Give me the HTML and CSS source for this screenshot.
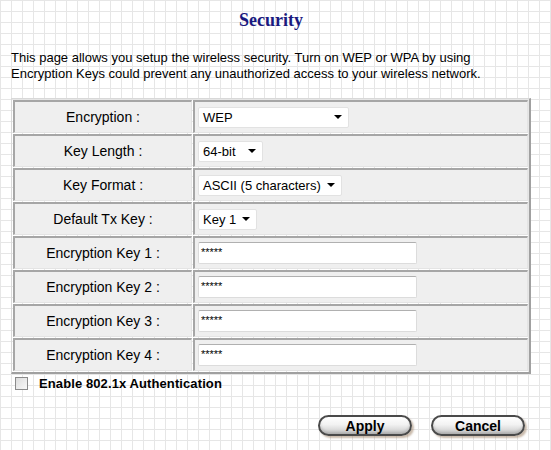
FILE: index.html
```html
<!DOCTYPE html>
<html>
<head>
<meta charset="utf-8">
<link rel="stylesheet" href="styles.css">
</head>
<body>
<div class="page">
  <h1 class="title">Security</h1>
  <p class="intro">This page allows you setup the wireless security. Turn on WEP or WPA by using Encryption Keys could prevent any unauthorized access to your wireless network.</p>
  <table class="form">
    <tr><td class="lbl">Encryption :</td><td class="val"><div class="sel w151"><span>WEP</span><i class="arrow"></i></div></td></tr>
    <tr><td class="lbl">Key Length :</td><td class="val"><div class="sel w65"><span>64-bit</span><i class="arrow"></i></div></td></tr>
    <tr><td class="lbl">Key Format :</td><td class="val"><div class="sel w143"><span>ASCII (5 characters)</span><i class="arrow"></i></div></td></tr>
    <tr><td class="lbl">Default Tx Key :</td><td class="val"><div class="sel w59"><span>Key 1</span><i class="arrow"></i></div></td></tr>
    <tr><td class="lbl">Encryption Key 1 :</td><td class="val"><div class="inp">*****</div></td></tr>
    <tr><td class="lbl">Encryption Key 2 :</td><td class="val"><div class="inp">*****</div></td></tr>
    <tr><td class="lbl">Encryption Key 3 :</td><td class="val"><div class="inp">*****</div></td></tr>
    <tr><td class="lbl">Encryption Key 4 :</td><td class="val"><div class="inp">*****</div></td></tr>
  </table>
  <label class="check"><span class="box"></span>Enable 802.1x Authentication</label>
  <div class="buttons">
    <button class="btn">Apply</button>
    <button class="btn">Cancel</button>
  </div>
</div>
</body>
</html>
```

FILE: styles.css
```css
html, body {
  margin: 0;
  padding: 0;
}
body {
  width: 551px;
  height: 450px;
  overflow: hidden;
  background-color: #fff;
  background-image:
    linear-gradient(#e6e6e6 1px, transparent 1px),
    linear-gradient(90deg, #e6e6e6 1px, transparent 1px);
  background-size: 11px 11px;
  font-family: "Liberation Sans", Arial, sans-serif;
  font-size: 13px;
  color: #000;
}
.page {
  padding: 0 0 0 11px;
  width: 520px;
}
.title {
  margin: 0;
  padding-top: 9px;
  width: 520px;
  text-align: center;
  font-family: "Liberation Serif", "Times New Roman", serif;
  font-size: 18px;
  line-height: 22px;
  font-weight: bold;
  color: #1a1a80;
}
.intro {
  margin: 19px 0 0 0;
  line-height: 16px;
  width: 500px;
}
.form {
  margin-top: 16px;
  width: 520px;
  border-collapse: separate;
  border-spacing: 1px;
  border-style: solid;
  border-width: 1px 2px 2px 1px;
  border-color: #d8d8d8 #a0a0a0 #a0a0a0 #d8d8d8;
}
.form td {
  height: 30px;
  padding: 0;
  background: #efefef;
  border-style: solid;
  border-width: 2px 1px 1px 2px;
  border-color: #a6a6a6 #e4e4e4 #e4e4e4 #a6a6a6;
  vertical-align: middle;
}
.form td.lbl {
  width: 176px;
  text-align: center;
  font-size: 14px;
}
.form td.val {
  padding-left: 3px;
}
.sel {
  box-sizing: border-box;
  height: 21px;
  background: #fff;
  border: 1px solid #e2e2e2;
  border-radius: 2px;
  display: flex;
  align-items: center;
  justify-content: space-between;
  padding: 0 6px 0 4px;
  font-size: 13px;
  white-space: nowrap;
}
.w151 { width: 151px; }
.w65 { width: 65px; }
.w143 { width: 144px; }
.w59 { width: 59px; }
.arrow {
  width: 0;
  height: 0;
  border-left: 4px solid transparent;
  border-right: 4px solid transparent;
  border-top: 4px solid #000;
}
.inp {
  box-sizing: border-box;
  width: 219px;
  height: 22px;
  background: #fff;
  border: 1px solid #dcdcdc;
  border-top-color: #b0b0b0;
  border-radius: 2px;
  font-size: 11px;
  line-height: 14px;
  padding: 2px 0 0 2px;
}
.check {
  display: flex;
  align-items: center;
  gap: 11px;
  margin: 2px 0 0 4px;
  font-weight: bold;
  font-size: 13px;
  letter-spacing: 0.1px;
}
.box {
  width: 11px;
  height: 11px;
  border: 1px solid #8a8a8a;
  background: linear-gradient(135deg, #dcdcdc, #f8f8f8);
}
.buttons {
  display: flex;
  justify-content: flex-end;
  gap: 19px;
  margin-top: 24px;
  padding-right: 6px;
}
.btn {
  width: 94px;
  height: 21px;
  border: 2px solid #4a4a4a;
  border-radius: 11px;
  background: linear-gradient(#ffffff 0%, #f2f2f2 45%, #c8c8c8 100%);
  box-shadow: 2px 2px 2px rgba(150, 120, 90, 0.5), inset 0 -2px 3px rgba(0,0,0,0.15);
  font-family: "Liberation Sans", Arial, sans-serif;
  font-weight: bold;
  font-size: 14px;
  color: #000;
  padding: 0;
  line-height: 16px;
}
```
